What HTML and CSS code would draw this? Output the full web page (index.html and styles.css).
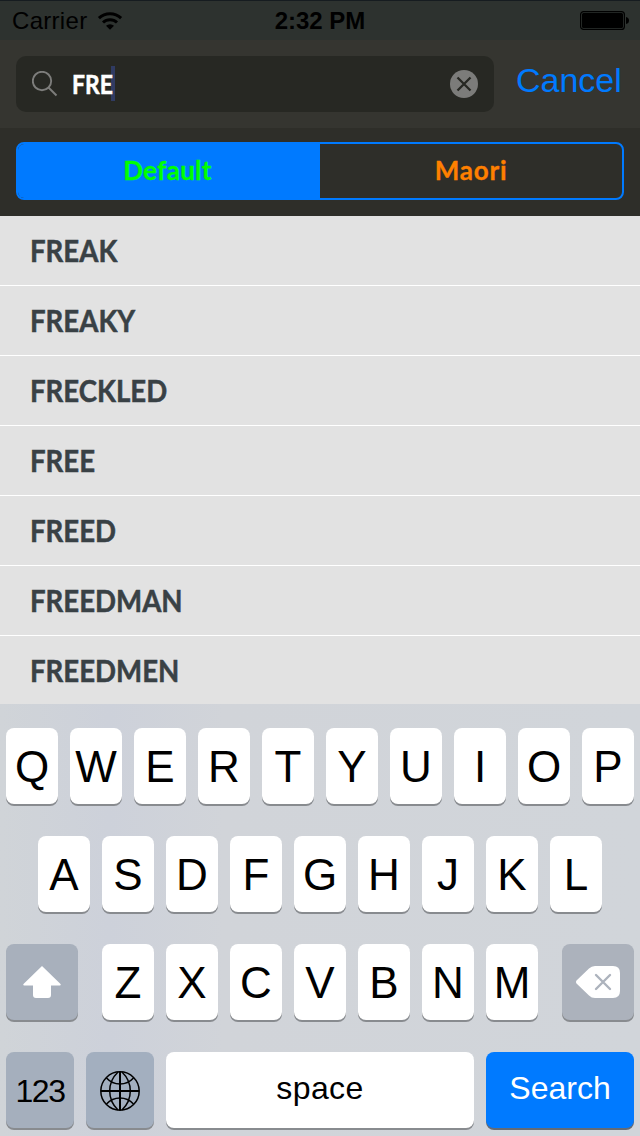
FILE: index.html
```html
<!DOCTYPE html>
<html>
	<head>
		<meta charset="utf-8" />
		<title>Search</title>
		<link rel="stylesheet" href="styles.css">
	</head>
	<body>
		<div id="status">
			<div class="carrier">
				<span>Carrier</span>
				<svg width="26" height="20" viewBox="0 0 26 20">
					<g fill="none" stroke="#000" stroke-width="3">
						<path d="M1.9 7.2a16.2 16.2 0 0 1 22.2 0" />
						<path d="M6 11.5a10.3 10.3 0 0 1 14 0" />
					</g>
					<path d="M9 14.8a6 6 0 0 1 8 0l-4 4z" />
				</svg>
			</div>
			<div class="clock">2:32 PM</div>
			<svg class="battery" width="50" height="20" viewBox="0 0 50 20">
				<rect x="0.6" y="0.6" width="43.8" height="17.8" rx="3" fill="none" stroke="#000" stroke-width="1.2" />
				<rect x="2" y="2" width="41" height="15" rx="1.5" />
				<path d="M46 6q3 .5 3 3.5t-3 3.5z" />
			</svg>
		</div>
		<div id="search-bar">
			<div class="field">
				<svg class="glass" width="26" height="26" viewBox="0 0 26 26" fill="none" stroke="#7d7d7b" stroke-width="1.9">
					<circle cx="10" cy="10" r="9.2" />
					<path d="M16.5 16.5L24.5 24.5" />
				</svg>
				<span class="query">FRE</span>
				<i class="caret"></i>
				<svg class="clear" width="28" height="28" viewBox="0 0 28 28">
					<circle cx="14" cy="14" r="14" fill="#7c7c7a" />
					<path d="M7.5 7.5l13 13M20.5 7.5l-13 13" stroke="#272823" stroke-width="2.3" />
				</svg>
			</div>
			<div class="cancel">Cancel</div>
		</div>
		<div id="scope">
			<div class="segments">
				<div class="segment active">Default</div>
				<div class="segment">Maori</div>
			</div>
		</div>
		<div id="words">
			<div class="word"><span>FREAK</span></div>
			<div class="word"><span>FREAKY</span></div>
			<div class="word"><span>FRECKLED</span></div>
			<div class="word"><span>FREE</span></div>
			<div class="word"><span>FREED</span></div>
			<div class="word"><span>FREEDMAN</span></div>
			<div class="word"><span>FREEDMEN</span></div>
		</div>
		<div id="keyboard">
			<div class="keys">
				<div class="key">Q</div>
				<div class="key">W</div>
				<div class="key">E</div>
				<div class="key">R</div>
				<div class="key">T</div>
				<div class="key">Y</div>
				<div class="key">U</div>
				<div class="key">I</div>
				<div class="key">O</div>
				<div class="key">P</div>
			</div>
			<div class="keys">
				<div class="key">A</div>
				<div class="key">S</div>
				<div class="key">D</div>
				<div class="key">F</div>
				<div class="key">G</div>
				<div class="key">H</div>
				<div class="key">J</div>
				<div class="key">K</div>
				<div class="key">L</div>
			</div>
			<div class="keys">
				<div class="key gray shift">
					<svg width="38" height="32" viewBox="0 0 38 32" fill="#fff">
						<path d="M19 0L37.5 18q.8 1.5-.8 1.5H28V29q0 3-3 3H13q-3 0-3-3V19.5H1.3q-1.6 0-.8-1.5z" />
					</svg>
				</div>
				<div class="key">Z</div>
				<div class="key">X</div>
				<div class="key">C</div>
				<div class="key">V</div>
				<div class="key">B</div>
				<div class="key">N</div>
				<div class="key">M</div>
				<div class="key gray delete">
					<svg width="44" height="32" viewBox="0 0 44 32">
						<path d="M.5 14.5L13 2.5Q15.5 0 19 0H37q7 0 7 7V25q0 7-7 7H19q-3.5 0-6-2.5L.5 17.5q-1-1.5 0-3z" fill="#fff" />
						<path d="M20 9l14 14M34 9l-14 14" stroke="#adb3bd" stroke-width="2.4" stroke-linecap="round" />
					</svg>
				</div>
			</div>
			<div class="keys">
				<div class="key gray numbers">123</div>
				<div class="key gray globe">
					<svg width="40" height="40" viewBox="0 0 40 40" fill="none" stroke="#000" stroke-width="1.5">
						<circle cx="20" cy="20" r="19.2" />
						<path d="M20 1V39M1 20H39" stroke-width="2" />
						<path d="M18 1Q9.7 9 9.7 20T18 39M22 1Q30.3 9 30.3 20T22 39" />
						<path d="M6.5 7Q12 13 20 13T33.5 7M6.5 33Q12 27 20 27T33.5 33" />
					</svg>
				</div>
				<div class="key space">space</div>
				<div class="key search">Search</div>
			</div>
		</div>
	</body>
</html>
```
FILE: styles.css
```css
* {
	box-sizing: border-box;
}

body {
	margin: 0px;
	width: 640px;
	height: 1136px;
	overflow: hidden;
	display: flex;
	flex-direction: column;
	font-family: "Liberation Sans", Arial, sans-serif;
	background-color: #e2e2e2;
}

svg {
	display: block;
	flex: none;
}

#status {
	display: grid;
	grid-template-columns: 1fr auto 1fr;
	align-items: center;
	height: 40px;
	padding: 0px 10px 0px 12px;
	border-top: 1px solid #161c20;
	background-color: #2d322f;
	font-size: 24px;
	line-height: 38px;
}

.carrier {
	display: flex;
	align-items: center;
	gap: 10px;
	letter-spacing: 0.3px;
}

.clock {
	margin-right: 2px;
	font-weight: bold;
	font-size: 24px;
}

.battery {
	justify-self: end;
}

#search-bar {
	display: flex;
	align-items: center;
	height: 88px;
	padding: 0px 16px;
	background-color: #353530;
}

.field {
	display: flex;
	align-items: center;
	width: 478px;
	height: 56px;
	padding: 0px 16px;
	border-radius: 10px;
	background-color: #272823;
}

.query {
	width: 41px;
	margin-left: 14px;
	font-family: Lato, sans-serif;
	font-weight: bold;
	font-size: 26px;
	line-height: 56px;
	color: white;
	-webkit-text-stroke: 0.5px white;
	transform: scaleX(0.88);
	transform-origin: left;
}

.caret {
	width: 4px;
	height: 35px;
	margin-left: -2px;
	margin-bottom: 2px;
	background-color: #303b62;
}

.clear {
	margin-left: auto;
}

.cancel {
	margin-left: 22px;
	margin-bottom: 7px;
	font-size: 34px;
	color: #007aff;
}

#scope {
	height: 88px;
	padding: 14px 16px 16px;
	background-color: #2e2e29;
}

.segments {
	display: flex;
	height: 58px;
	border: 2px solid #007aff;
	border-radius: 8px;
	overflow: hidden;
}

.segment {
	width: 50%;
	text-align: center;
	font-family: Lato, sans-serif;
	font-weight: bold;
	font-size: 26px;
	letter-spacing: 0.8px;
	line-height: 52px;
	color: #ff8000;
	-webkit-text-stroke: 0.3px #ff8000;
}

.segment.active {
	padding-right: 3px;
	background-color: #007aff;
	color: #00ff00;
	-webkit-text-stroke-color: #00ff00;
	letter-spacing: 0.3px;
}

#words {
	height: 488px;
	overflow: hidden;
}

.word {
	height: 70px;
	padding-left: 30px;
	border-bottom: 1px solid white;
	font-family: Lato, sans-serif;
	font-weight: bold;
	font-size: 30px;
	line-height: 69px;
	color: #394145;
	-webkit-text-stroke: 0.5px #394145;
}

.word span {
	display: inline-block;
	transform: scaleX(0.92);
	transform-origin: left;
}

#keyboard {
	display: flex;
	flex-direction: column;
	gap: 32px;
	height: 432px;
	padding: 24px 6px 0px;
	background-color: #d1d5da;
	background-image: linear-gradient(90deg, #d0d4d8 0%, #cdd1da 17%, #d1d4d9 35%, #d1d5da 100%);
}

.keys {
	display: flex;
	justify-content: center;
	gap: 12px;
}

.key {
	display: flex;
	align-items: center;
	justify-content: center;
	width: 52px;
	height: 76px;
	border-radius: 8px;
	background-color: white;
	box-shadow: 0px 2px 0px #888b8f;
	font-size: 44px;
	padding-top: 2px;
}

.gray {
	background-color: #acb2bc;
	padding-top: 0px;
}

.shift {
	width: 72px;
	margin-right: 12px;
	background-color: #a8b0bc;
}

.delete {
	width: 72px;
	margin-left: 12px;
}

.numbers {
	width: 68px;
	padding-top: 2px;
	background-color: #a5afbd;
	font-size: 32px;
	letter-spacing: -1.5px;
}

.globe {
	width: 68px;
	padding-top: 2px;
	background-color: #a3afbf;
}

.space {
	width: 308px;
	font-size: 32px;
	letter-spacing: 0.4px;
	padding: 0px 0px 3px;
}

.search {
	width: 148px;
	padding: 0px 0px 3px;
	background-color: #007aff;
	box-shadow: 0px 2px 0px #636b76;
	font-size: 32px;
	color: white;
}
```
